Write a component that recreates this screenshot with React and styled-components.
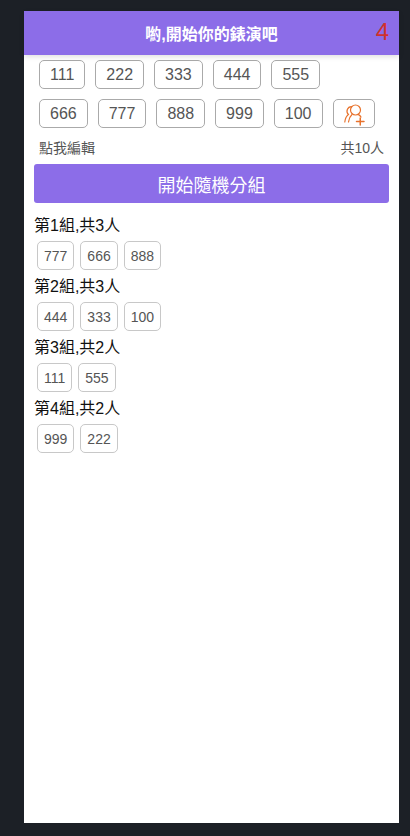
import React from "react";
import styled, { createGlobalStyle } from "styled-components";

const Global = createGlobalStyle`
  html, body { margin: 0; padding: 0; height: 100%; background: #1c2026; }
  body { font-family: "Liberation Sans", "Noto Sans CJK TC", sans-serif; }
  #root { height: 100%; }
`;

const Page = styled.div`
  box-sizing: border-box;
  height: 836px;
  padding: 11px 11px 13px 24px;
`;

const Panel = styled.main`
  height: 100%;
  background: #fff;
  display: flex;
  flex-direction: column;
`;

const Header = styled.header`
  position: relative;
  flex: none;
  height: 44px;
  background: #8c6de8;
  color: #fff;
  display: flex;
  align-items: center;
  justify-content: center;
  font-size: 16px;
  font-weight: 700;
  box-shadow: 0 2px 5px rgba(0, 0, 0, 0.12);
`;

const Count = styled.span`
  position: absolute;
  right: 10px;
  top: 5px;
  font-size: 24px;
  line-height: 32px;
  font-weight: 400;
  color: #d0312d;
`;

const Roster = styled.section`
  padding: 5px 15px 0;
  display: flex;
  flex-direction: column;
  gap: 10px;
`;

const ChipRow = styled.div`
  display: flex;
  gap: ${(p) => p.$gap || 10}px;
`;

const Chip = styled.span`
  box-sizing: border-box;
  height: 29px;
  padding: 0 10px;
  border: 1px solid #aaa;
  border-radius: 5px;
  display: inline-flex;
  align-items: center;
  font-size: 16px;
  color: #555;
`;

const AddChip = styled.button`
  box-sizing: border-box;
  width: 42px;
  height: 29px;
  padding: 0;
  border: 1px solid #aaa;
  border-radius: 5px;
  background: #fff;
  display: inline-flex;
  align-items: center;
  justify-content: center;
`;

const Meta = styled.div`
  display: flex;
  justify-content: space-between;
  padding: 12px 15px 0;
  font-size: 14px;
  line-height: 16px;
  color: #555;
`;

const Primary = styled.button`
  flex: none;
  margin: 8px 10px 0;
  height: 39px;
  border: 0;
  border-radius: 3px;
  background: #8c6de8;
  color: #fff;
  font: 18px "Liberation Sans", "Noto Sans CJK TC", sans-serif;
`;

const Groups = styled.section`
  padding: 14px 10px 0;
`;

const GroupTitle = styled.div`
  font-size: 16px;
  line-height: 18px;
  color: #111;
`;

const GroupChips = styled.div`
  display: flex;
  gap: 6px;
  padding: 6px 3px 8px;
`;

const MemberChip = styled.span`
  box-sizing: border-box;
  height: 29px;
  padding: 0 6px;
  border: 1px solid #c8c8c8;
  border-radius: 5px;
  display: inline-flex;
  align-items: center;
  font-size: 14px;
  color: #555;
`;

const AddUserIcon = () => (
  <svg width="24" height="24" viewBox="0 0 24 24" fill="none" stroke="#e8722c" strokeWidth="1.2" strokeLinecap="round">
    <circle cx="13.5" cy="8" r="5" />
    <path d="M9.5 4.6A4.6 4.6 0 0 0 6.4 12.5C4.4 14 3.2 16.5 2.8 20" />
    <path d="M10 12.5C7.8 14.5 6.8 17 6.5 20" />
    <path d="M16.5 12.6C17.6 13.2 18.4 14 19 15" />
    <path d="M14.5 19.5H22M18.25 16V23" strokeWidth="1.5" />
  </svg>
);

const row1 = ["111", "222", "333", "444", "555"];
const row2 = ["666", "777", "888", "999", "100"];
const groups = [
  ["第1組,共3人", ["777", "666", "888"]],
  ["第2組,共3人", ["444", "333", "100"]],
  ["第3組,共2人", ["111", "555"]],
  ["第4組,共2人", ["999", "222"]],
];

export default function App() {
  return (
    <Page>
      <Global />
      <Panel>
        <Header>
          喲,開始你的錶演吧
          <Count>4</Count>
        </Header>
        <Roster>
          <ChipRow>
            {row1.map((n) => (
              <Chip key={n}>{n}</Chip>
            ))}
          </ChipRow>
          <ChipRow>
            {row2.map((n) => (
              <Chip key={n}>{n}</Chip>
            ))}
            <AddChip aria-label="add">
              <AddUserIcon />
            </AddChip>
          </ChipRow>
        </Roster>
        <Meta>
          <span>點我編輯</span>
          <span>共10人</span>
        </Meta>
        <Primary>開始隨機分組</Primary>
        <Groups>
          {groups.map(([title, members]) => (
            <div key={title}>
              <GroupTitle>{title}</GroupTitle>
              <GroupChips>
                {members.map((m) => (
                  <MemberChip key={m}>{m}</MemberChip>
                ))}
              </GroupChips>
            </div>
          ))}
        </Groups>
      </Panel>
    </Page>
  );
}
